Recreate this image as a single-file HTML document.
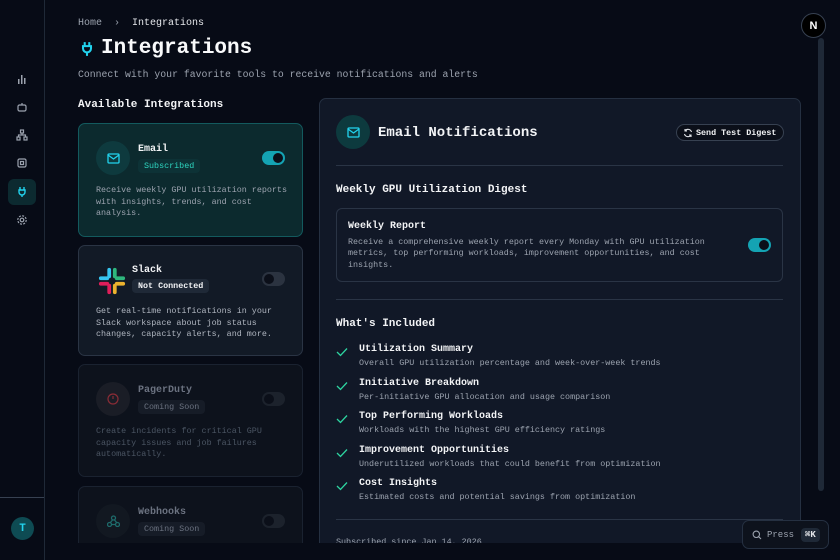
<!DOCTYPE html>
<html><head><meta charset="utf-8"><style>
*{box-sizing:border-box;margin:0;padding:0}
body{width:840px;height:560px;background:#070b16;font-family:"Liberation Mono",monospace;color:#e5e7eb;position:relative;overflow:hidden}
.side{position:absolute;left:0;top:0;width:45px;height:560px;border-right:1px solid #1f2937;background:#070b16}
.side .ic{position:absolute;left:8px;width:28px;height:26px;display:flex;align-items:center;justify-content:center;border-radius:6px}
.side .sep{position:absolute;left:0;top:497px;width:44px;border-top:1px solid #374151}
.av{position:absolute;left:11px;top:517px;width:23px;height:23px;border-radius:50%;background:#0e4b53;color:#22d3ee;font-size:11px;font-weight:bold;display:flex;align-items:center;justify-content:center}
.main{position:absolute;left:45px;top:0;width:795px;height:543px;overflow:hidden}
.abs{position:absolute}
.card{position:absolute;left:33px;width:225px;border:1px solid #1f2937;border-radius:7px;background:#0f1520}
.card .ico{position:absolute;left:17px;top:17px;width:34px;height:34px;border-radius:50%;display:flex;align-items:center;justify-content:center}
.card .name{position:absolute;left:59px;top:20px;font-size:10px;font-weight:bold;color:#f3f4f6}
.badge{position:absolute;left:59px;top:35px;font-size:8.4px;padding:2px 6px;border-radius:4px}
.card .desc{position:absolute;left:17px;top:61px;font-size:8.4px;line-height:11.5px;color:#9ca3af;width:200px}
.tog{position:absolute;width:23px;height:14px;border-radius:7px}
.tog i{position:absolute;top:2px;width:10px;height:10px;border-radius:50%;background:#0b0f19}
.panel{position:absolute;left:274px;top:98px;width:482px;height:470px;border:1px solid #253041;border-radius:7px;background:#111827}
.hr{position:absolute;left:16px;width:447px;border-top:1px solid #2a3445}
.item{position:absolute;left:16px}
.item .t{position:absolute;left:23px;top:0;font-size:10px;font-weight:bold;color:#f3f4f6;white-space:nowrap}
.item .d{position:absolute;left:23px;top:14px;font-size:8.4px;color:#9ca3af;white-space:nowrap}
.item svg{position:absolute;left:0;top:3px}
</style></head><body>
<div class="side">
 <div class="ic" style="top:66px"><svg width="12" height="12" viewBox="0 0 12 12" fill="#9ca3af"><rect x="2" y="6" width="1.5" height="5"/><rect x="5" y="2" width="1.5" height="9"/><rect x="8" y="5" width="1.5" height="6"/></svg></div>
 <div class="ic" style="top:94px"><svg width="12" height="12" viewBox="0 0 12 12" fill="none" stroke="#9ca3af" stroke-width="1.2"><rect x="2" y="4" width="8" height="6" rx="1.5"/><path d="M6 4V2M4.5 7h0M7.5 7h0"/></svg></div>
 <div class="ic" style="top:122px"><svg width="12" height="12" viewBox="0 0 12 12" fill="none" stroke="#9ca3af" stroke-width="1.2"><rect x="4.5" y="1" width="3" height="3"/><rect x="1" y="8" width="3" height="3"/><rect x="8" y="8" width="3" height="3"/><path d="M6 4v2M2.5 8V6h7v2"/></svg></div>
 <div class="ic" style="top:150px"><svg width="12" height="12" viewBox="0 0 12 12" fill="none" stroke="#9ca3af" stroke-width="1.2"><rect x="2" y="2" width="8" height="8" rx="1.5"/><rect x="4.5" y="4.5" width="3" height="3"/></svg></div>
 <div class="ic" style="top:179px;background:#0c2a30"><svg width="12" height="12" viewBox="0 0 12 12" fill="none" stroke="#22d3ee" stroke-width="1.4"><path d="M4 1v3M8 1v3M3 4h6v2a3 3 0 0 1-6 0zM6 9v2"/></svg></div>
 <div class="ic" style="top:207px"><svg width="12" height="12" viewBox="0 0 12 12" fill="none" stroke="#9ca3af" stroke-width="1.2"><circle cx="6" cy="6" r="1.8"/><circle cx="6" cy="6" r="4.2" stroke-dasharray="2 1.3"/></svg></div>
 <div class="sep"></div>
 <div class="av">T</div>
</div>
<div class="main">
 <div class="abs" style="left:33px;top:18px;font-size:10px;color:#9ca3af">Home &nbsp;›&nbsp; <span style="color:#e5e7eb">Integrations</span></div>
 <div class="abs" style="left:35px;top:41px"><svg width="14" height="16" viewBox="0 0 12 14" fill="none" stroke="#22d3ee" stroke-width="1.8"><path d="M4 1v3M8 1v3M2.5 4.5h7v2a3.5 3.5 0 0 1-7 0zM6 10v3"/></svg></div>
 <div class="abs" style="left:56px;top:37px;font-size:21px;font-weight:bold;color:#f9fafb">Integrations</div>
 <div class="abs" style="left:33px;top:69px;font-size:9.8px;color:#9ca3af">Connect with your favorite tools to receive notifications and alerts</div>
 <div class="abs" style="left:33px;top:99px;font-size:11px;font-weight:bold;color:#f3f4f6">Available Integrations</div>

 <div class="card" style="top:123px;height:114px;background:#0c2a2e;border-color:#135a5e">
  <div class="ico" style="background:#0e3a3e"><svg width="13" height="11" viewBox="0 0 13 11" fill="none" stroke="#22d3ee" stroke-width="1.3"><rect x="1" y="1" width="11" height="9" rx="1"/><path d="M1 2l5.5 4 5.5-4"/></svg></div>
  <div class="name">Email</div>
  <div class="badge" style="color:#2dd4bf;background:#0d3236">Subscribed</div>
  <div class="tog" style="left:183px;top:27px;background:#14a3b3"><i style="left:11px"></i></div>
  <div class="desc">Receive weekly GPU utilization reports with insights, trends, and cost analysis.</div>
 </div>

 <div class="card" style="top:245px;height:111px;background:#121a26;border-color:#2a3444">
  <div class="ico" style="left:16px;top:18px"><svg width="28" height="28" viewBox="0 0 30 30"><rect x="1" y="10" width="11" height="4" rx="2" fill="#36c5f0"/><rect x="10" y="1" width="4" height="11" rx="2" fill="#36c5f0"/><rect x="16" y="1" width="4" height="11" rx="2" fill="#2eb67d"/><rect x="18" y="10" width="11" height="4" rx="2" fill="#2eb67d"/><rect x="18" y="16" width="11" height="4" rx="2" fill="#ecb22e"/><rect x="16" y="18" width="4" height="11" rx="2" fill="#ecb22e"/><rect x="10" y="18" width="4" height="11" rx="2" fill="#e01e5a"/><rect x="1" y="16" width="11" height="4" rx="2" fill="#e01e5a"/></svg></div>
  <div class="name" style="left:53px;top:19px">Slack</div>
  <div class="badge" style="left:53px;top:33px;color:#f3f4f6;background:#1f2937;font-weight:bold">Not Connected</div>
  <div class="tog" style="left:183px;top:26px;background:#2b3340"><i style="left:2px"></i></div>
  <div class="desc" style="top:60px;color:#b0b6c0">Get real-time notifications in your Slack workspace about job status changes, capacity alerts, and more.</div>
 </div>

 <div class="card" style="top:364px;height:113px;background:#0d121c;border-color:#1a2230">
  <div class="ico" style="background:#1a1d26"><svg width="12" height="12" viewBox="0 0 12 12" fill="none" stroke="#8a2c36" stroke-width="1.2"><circle cx="6" cy="6" r="5"/><path d="M6 3v3"/></svg></div>
  <div class="name" style="color:#6b7280">PagerDuty</div>
  <div class="badge" style="color:#6b7280;background:#161c27">Coming Soon</div>
  <div class="tog" style="left:183px;top:27px;background:#1c222c"><i style="left:2px"></i></div>
  <div class="desc" style="color:#4b5563">Create incidents for critical GPU capacity issues and job failures automatically.</div>
 </div>

 <div class="card" style="top:486px;height:100px;background:#0d121c;border-color:#1a2230">
  <div class="ico" style="background:#121821"><svg width="13" height="12" viewBox="0 0 13 12" fill="none" stroke="#1e6b6b" stroke-width="1.3"><circle cx="6.5" cy="3" r="2"/><circle cx="2.5" cy="9.5" r="2"/><circle cx="10.5" cy="9.5" r="2"/><path d="M5.5 5l-2.5 3M4.5 9.5h4M7.5 5l2.5 3"/></svg></div>
  <div class="name" style="color:#6b7280">Webhooks</div>
  <div class="badge" style="color:#6b7280;background:#161c27">Coming Soon</div>
  <div class="tog" style="left:183px;top:27px;background:#1c222c"><i style="left:2px"></i></div>
 </div>

 <div class="panel">
  <div class="abs" style="left:16px;top:16px;width:34px;height:34px;border-radius:50%;background:#0d3a3e;display:flex;align-items:center;justify-content:center"><svg width="13" height="11" viewBox="0 0 13 11" fill="none" stroke="#22d3ee" stroke-width="1.3"><rect x="1" y="1" width="11" height="9" rx="1"/><path d="M1 2l5.5 4 5.5-4"/></svg></div>
  <div class="abs" style="left:58px;top:26px;font-size:14px;font-weight:bold;color:#f3f4f6">Email Notifications</div>
  <div class="abs" style="left:356px;top:25px;height:17px;width:108px;border:1px solid #374151;border-radius:9px;background:#0b0f19;font-size:8.4px;font-weight:bold;color:#f3f4f6;display:flex;align-items:center;padding-left:6px;gap:3px"><svg width="10" height="10" viewBox="0 0 10 10" fill="none" stroke="#e5e7eb" stroke-width="1.1"><path d="M8.5 4A3.6 3.6 0 0 0 2 3M1.5 6A3.6 3.6 0 0 0 8 7M2 1v2h2M8 9V7H6"/></svg>Send Test Digest</div>
  <div class="hr" style="top:66px"></div>
  <div class="abs" style="left:16px;top:85px;font-size:11px;font-weight:bold;color:#f3f4f6">Weekly GPU Utilization Digest</div>
  <div class="abs" style="left:16px;top:109px;width:447px;height:74px;border:1px solid #2a3445;border-radius:6px">
   <div class="abs" style="left:11px;top:12px;font-size:10px;font-weight:bold;color:#f3f4f6">Weekly Report</div>
   <div class="abs" style="left:11px;top:28px;width:370px;font-size:8.4px;line-height:11.3px;color:#9ca3af">Receive a comprehensive weekly report every Monday with GPU utilization metrics, top performing workloads, improvement opportunities, and cost insights.</div>
   <div class="tog" style="left:411px;top:29px;background:#14a3b3"><i style="left:11px"></i></div>
  </div>
  <div class="hr" style="top:200px"></div>
  <div class="abs" style="left:16px;top:219px;font-size:11px;font-weight:bold;color:#f3f4f6">What's Included</div>
  <div class="item" style="top:245px"><svg width="12" height="10" viewBox="0 0 12 10" fill="none" stroke="#2dd4a0" stroke-width="1.3"><path d="M1 5l3.5 3.5L11 1.5"/></svg><div class="t">Utilization Summary</div><div class="d">Overall GPU utilization percentage and week-over-week trends</div></div>
  <div class="item" style="top:279px"><svg width="12" height="10" viewBox="0 0 12 10" fill="none" stroke="#2dd4a0" stroke-width="1.3"><path d="M1 5l3.5 3.5L11 1.5"/></svg><div class="t">Initiative Breakdown</div><div class="d">Per-initiative GPU allocation and usage comparison</div></div>
  <div class="item" style="top:312px"><svg width="12" height="10" viewBox="0 0 12 10" fill="none" stroke="#2dd4a0" stroke-width="1.3"><path d="M1 5l3.5 3.5L11 1.5"/></svg><div class="t">Top Performing Workloads</div><div class="d">Workloads with the highest GPU efficiency ratings</div></div>
  <div class="item" style="top:346px"><svg width="12" height="10" viewBox="0 0 12 10" fill="none" stroke="#2dd4a0" stroke-width="1.3"><path d="M1 5l3.5 3.5L11 1.5"/></svg><div class="t">Improvement Opportunities</div><div class="d">Underutilized workloads that could benefit from optimization</div></div>
  <div class="item" style="top:379px"><svg width="12" height="10" viewBox="0 0 12 10" fill="none" stroke="#2dd4a0" stroke-width="1.3"><path d="M1 5l3.5 3.5L11 1.5"/></svg><div class="t">Cost Insights</div><div class="d">Estimated costs and potential savings from optimization</div></div>
  <div class="hr" style="top:420px"></div>
  <div class="abs" style="left:16px;top:438px;font-size:8.4px;color:#9ca3af">Subscribed since Jan 14, 2026</div>
 </div>
</div>
<div class="abs" style="left:818px;top:38px;width:6px;height:453px;border-radius:3px;background:#1f2937"></div>
<div class="abs" style="left:801px;top:13px;width:25px;height:25px;border-radius:50%;background:#000;border:1px solid #374151;color:#fff;font-size:11px;font-weight:bold;display:flex;align-items:center;justify-content:center;font-family:'Liberation Sans',sans-serif">N</div>
<div class="abs" style="left:742px;top:520px;width:87px;height:29px;border:1px solid #253041;border-radius:7px;background:#0d121c;display:flex;align-items:center;padding-left:9px;gap:5px;font-size:9px;color:#9ca3af"><svg width="10" height="10" viewBox="0 0 10 10" fill="none" stroke="#9ca3af" stroke-width="1.1"><circle cx="4.3" cy="4.3" r="3.2"/><path d="M6.7 6.7L9 9"/></svg>Press<span style="background:#1f2937;color:#e5e7eb;border-radius:4px;padding:2px 4px;font-weight:bold;margin-left:2px">⌘K</span></div>
</body></html>
